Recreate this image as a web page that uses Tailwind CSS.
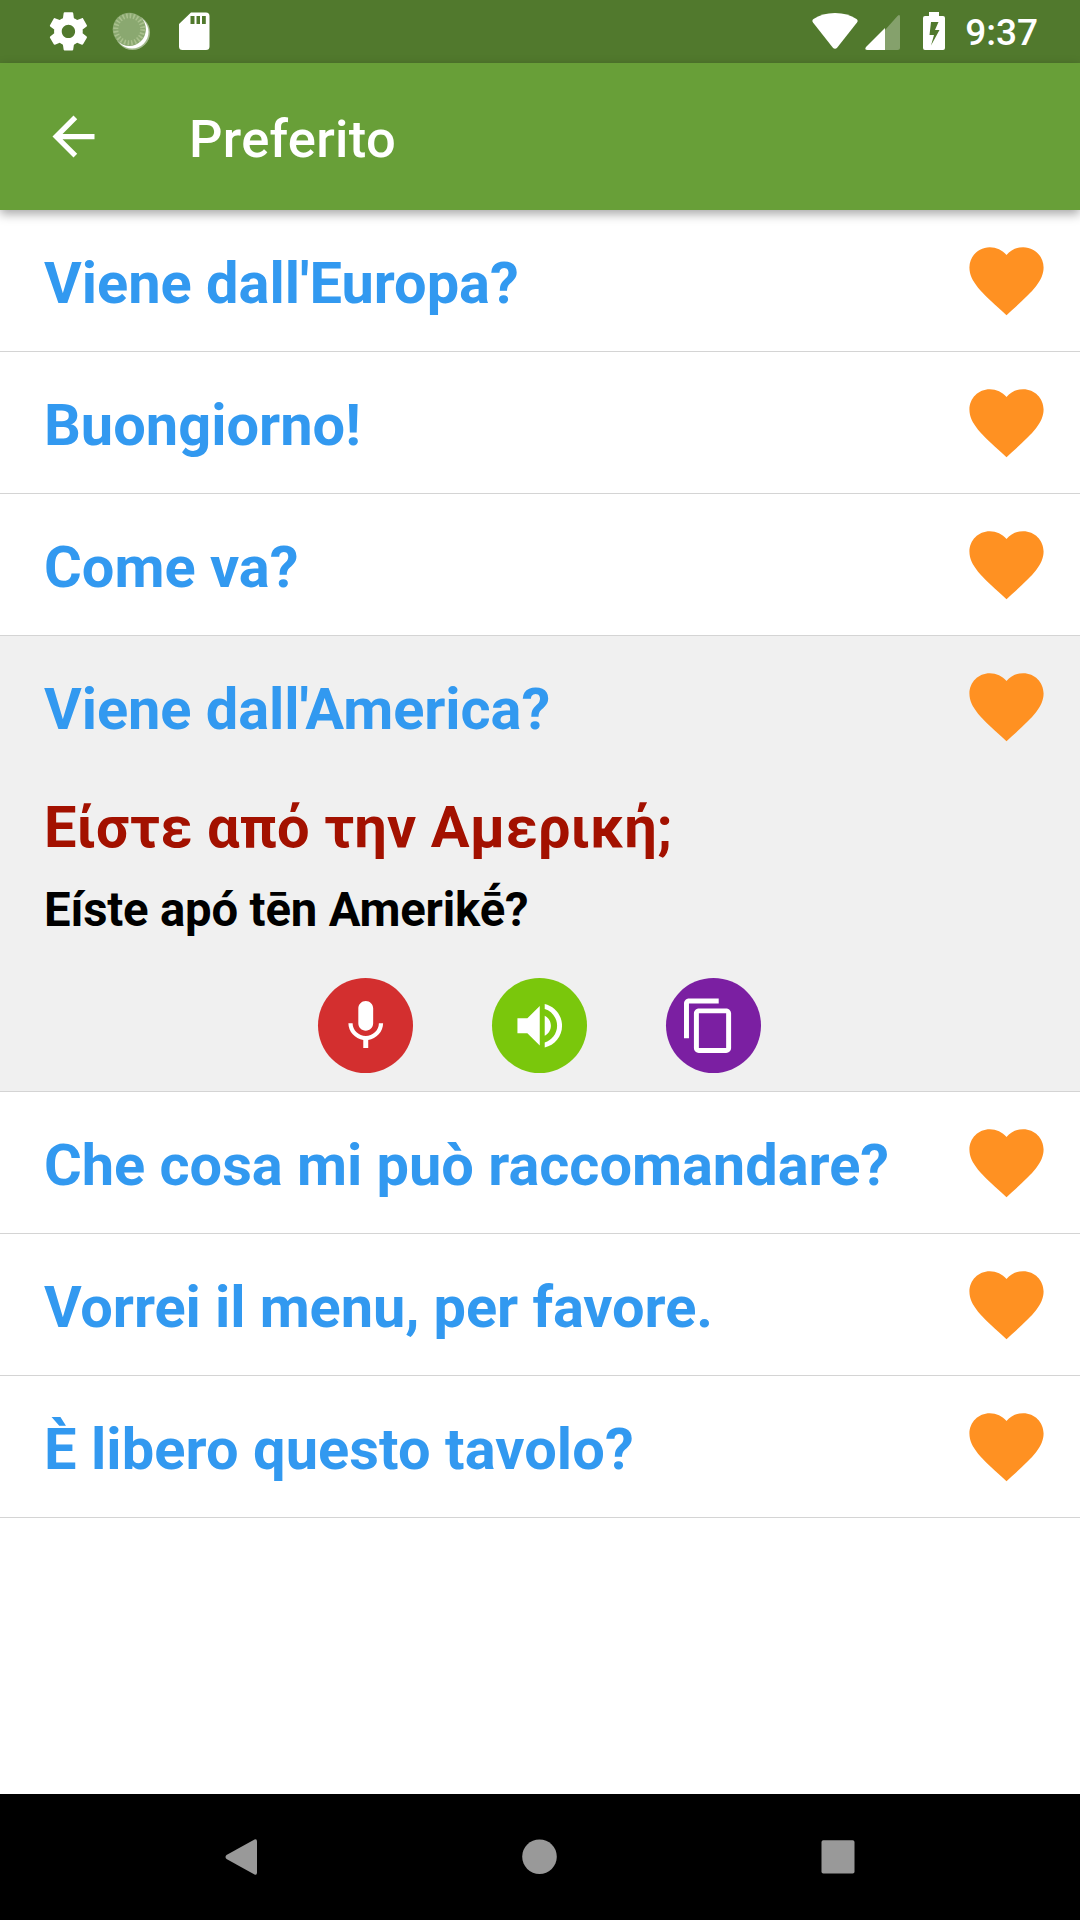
<!DOCTYPE html>
<html lang="it">
<head>
<meta charset="utf-8">
<title>Preferito</title>
<script src="https://cdn.jsdelivr.net/npm/@tailwindcss/browser@4"></script>
</head>
<body class="bg-white">
<svg class="hidden">
  <symbol id="heart" viewBox="0 0 24 24"><path d="M12 21.35l-1.45-1.32C5.4 15.36 2 12.28 2 8.5 2 5.42 4.42 3 7.5 3c1.74 0 3.41.81 4.5 2.09C13.09 3.81 14.76 3 16.5 3 19.58 3 22 5.42 22 8.5c0 3.78-3.4 6.86-8.55 11.54L12 21.35z"/></symbol>
</svg>
<div class="flex h-[1920px] w-[1080px] flex-col overflow-hidden bg-white font-['Roboto',sans-serif]">
  <!-- status bar -->
  <div class="flex h-[63px] shrink-0 items-start justify-between bg-[#51792d] text-white">
    <svg class="h-[63px] w-[240px]" viewBox="0 0 240 63" fill="currentColor">
      <path transform="translate(45.5 8.5) scale(1.91)" d="M19.43 12.98c.04-.32.07-.64.07-.98s-.03-.66-.07-.98l2.11-1.65c.19-.15.24-.42.12-.64l-2-3.46c-.12-.22-.39-.3-.61-.22l-2.49 1c-.52-.4-1.08-.73-1.69-.98l-.38-2.65C14.46 2.18 14.25 2 14 2h-4c-.25 0-.46.18-.49.42l-.38 2.65c-.61.25-1.17.59-1.69.98l-2.49-1c-.23-.09-.49 0-.61.22l-2 3.46c-.13.22-.07.49.12.64l2.11 1.65c-.04.32-.07.65-.07.98s.03.66.07.98l-2.11 1.65c-.19.15-.24.42-.12.64l2 3.46c.12.22.39.3.61.22l2.49-1c.52.4 1.08.73 1.69.98l.38 2.65c.03.24.24.42.49.42h4c.25 0 .46-.18.49-.42l.38-2.65c.61-.25 1.17-.59 1.69-.98l2.49 1c.23.09.49 0 .61-.22l2-3.46c.12-.22.07-.49-.12-.64l-2.11-1.65zM12 15.5c-1.93 0-3.5-1.57-3.5-3.5s1.57-3.5 3.5-3.5 3.5 1.57 3.5 3.5-1.57 3.5-3.5 3.5z"/>
      <circle cx="132.500" cy="32.500" r="17.500" fill="#a3b98e"/>
      <circle cx="132" cy="32" r="16.500" fill="#fff"/>
      <circle cx="129.300" cy="29.300" r="16.600" fill="#8aa870"/>
      <circle cx="129.300" cy="29.300" r="13.500" fill="none" stroke="#a9c08d" stroke-width="5" stroke-dasharray="1.600 1.934"/>
      <path fill-rule="evenodd" d="M191 12.500h15a3.500 3.500 0 0 1 3.500 3.500v30.500a3.500 3.500 0 0 1-3.500 3.500h-23.500a3.500 3.500 0 0 1-3.500-3.500V24zM190.500 16v8h4v-8zM196.500 16v8h3.500v-8zM202 16v8h3.800v-8z"/>
    </svg>
    <div class="flex items-start pr-[42px]">
      <svg class="h-[63px] w-[160px]" viewBox="805 0 160 63" fill="currentColor">
        <path d="M813 22.500Q811.500 20.500 813.500 19Q822 13 835 13T856.500 19Q858.500 20.500 857 22.500L837.300 47.500Q835 50 832.700 47.500Z"/>
        <path fill-opacity=".3" d="M885 30L897.500 16Q900 13.500 900 17V47.500Q900 50 897.500 50H885Z"/>
        <path d="M885 28V50H867.500Q864 50 866 47Z"/>
        <path fill-rule="evenodd" d="M929 12h10v4h4a2 2 0 0 1 2 2v30a2 2 0 0 1-2 2h-18a2 2 0 0 1-2-2V18a2 2 0 0 1 2-2h4zM931 22L929.500 35H934L931 45.500L939.500 30H935L938.500 22Z"/>
      </svg>
      <span class="pt-[11px] text-[37px] leading-[44px] font-medium">9:37</span>
    </div>
  </div>
  <!-- app bar -->
  <div class="z-10 flex h-[147px] shrink-0 items-center bg-[#689f38] pl-[42px] text-white shadow-[0_4px_10px_rgba(0,0,0,0.35)]">
    <svg class="size-[63px]" viewBox="0 0 24 24" fill="currentColor"><path d="M20 11H7.830l5.590-5.590L12 4l-8 8 8 8 1.410-1.410L7.830 13H20v-2z"/></svg>
    <h1 class="pt-[4px] pl-[84px] text-[52.5px] leading-[62px] font-medium tracking-[0.3px]">Preferito</h1>
  </div>
  <!-- phrases -->
  <ul class="flex-1 text-[57.75px] leading-[68px] font-bold text-[#3299f0]">
    <li class="flex h-[142px] items-start justify-between border-b border-[#d4d4d4] pr-[29px] pl-[44px]"><span class="pt-[39px]">Viene dall'Europa?</span><svg class="mt-[26px] size-[89px] fill-[#ff9122]"><use href="#heart"/></svg></li>
    <li class="flex h-[142px] items-start justify-between border-b border-[#d4d4d4] pr-[29px] pl-[44px]"><span class="pt-[39px]">Buongiorno!</span><svg class="mt-[26px] size-[89px] fill-[#ff9122]"><use href="#heart"/></svg></li>
    <li class="flex h-[142px] items-start justify-between border-b border-[#d4d4d4] pr-[29px] pl-[44px]"><span class="pt-[39px]">Come va?</span><svg class="mt-[26px] size-[89px] fill-[#ff9122]"><use href="#heart"/></svg></li>
    <li class="h-[456px] border-b border-[#d4d4d4] bg-[#f0f0f0]">
      <div class="flex h-[142px] items-start justify-between pr-[29px] pl-[44px]"><span class="pt-[39px] tracking-[-0.06px]">Viene dall'America?</span><svg class="mt-[26px] size-[89px] fill-[#ff9122]"><use href="#heart"/></svg></div>
      <p class="pt-[15px] pl-[44px] tracking-[0.12px] text-[#a31100]">Είστε από την Αμερική;</p>
      <p class="pt-[21px] pl-[44px] text-[47.25px] leading-[56px] tracking-[-0.17px] text-black">Eíste apó tēn Amerikḗ?</p>
      <div class="flex justify-center gap-[79px] pt-[40px] pr-px text-white">
        <div class="flex size-[95px] items-center justify-center rounded-full bg-[#d32f2f]"><svg class="size-[59.5px]" viewBox="0 0 24 24" fill="currentColor"><path d="M12 14c1.660 0 2.990-1.340 2.990-3L15 5c0-1.660-1.340-3-3-3S9 3.340 9 5v6c0 1.660 1.340 3 3 3zm5.300-3c0 3-2.540 5.100-5.300 5.100S6.700 14 6.700 11H5c0 3.410 2.720 6.230 6 6.720V21h2v-3.280c3.280-.48 6-3.300 6-6.720h-1.700z"/></svg></div>
        <div class="flex size-[95px] items-center justify-center rounded-full bg-[#7ac70c]"><svg class="size-[59.5px]" viewBox="0 0 24 24" fill="currentColor"><path d="M3 9v6h4l5 5V4L7 9H3zm13.500 3c0-1.770-1.020-3.290-2.500-4.030v8.050c1.480-.73 2.500-2.250 2.500-4.020zM14 3.230v2.060c2.890.86 5 3.540 5 6.710s-2.110 5.850-5 6.710v2.060c4.010-.91 7-4.490 7-8.770s-2.990-7.860-7-8.770z"/></svg></div>
        <div class="flex size-[95px] items-center justify-center rounded-full bg-[#7b1fa2]"><svg class="size-[59.5px]" viewBox="2 0 24 24" fill="currentColor"><path d="M16 1H4c-1.100 0-2 .9-2 2v14h2V3h12V1zm3 4H8c-1.100 0-2 .9-2 2v14c0 1.100.9 2 2 2h11c1.100 0 2-.9 2-2V7c0-1.100-.9-2-2-2zm0 16H8V7h11v14z"/></svg></div>
      </div>
    </li>
    <li class="flex h-[142px] items-start justify-between border-b border-[#d4d4d4] pr-[29px] pl-[44px]"><span class="pt-[39px] tracking-[-0.03px]">Che cosa mi può raccomandare?</span><svg class="mt-[26px] size-[89px] fill-[#ff9122]"><use href="#heart"/></svg></li>
    <li class="flex h-[142px] items-start justify-between border-b border-[#d4d4d4] pr-[29px] pl-[44px]"><span class="pt-[39px] tracking-[-0.09px]">Vorrei il menu, per favore.</span><svg class="mt-[26px] size-[89px] fill-[#ff9122]"><use href="#heart"/></svg></li>
    <li class="flex h-[142px] items-start justify-between border-b border-[#d4d4d4] pr-[29px] pl-[44px]"><span class="pt-[39px] tracking-[0.08px]">È libero questo tavolo?</span><svg class="mt-[26px] size-[89px] fill-[#ff9122]"><use href="#heart"/></svg></li>
  </ul>
  <!-- navigation bar -->
  <div class="h-[126px] shrink-0 bg-black">
    <svg class="h-[126px] w-[1080px]" viewBox="0 0 1080 126" fill="#999">
      <path d="M254.500 45.500Q257 44.500 257 47.500V78.500Q257 81.500 254.500 80.500L226.500 65Q224.500 63 226.500 61Z"/>
      <circle cx="539.500" cy="62.700" r="17.300"/>
      <rect x="821.500" y="46.300" width="33" height="33.300" rx="1.800"/>
    </svg>
  </div>
</div>
</body>
</html>
